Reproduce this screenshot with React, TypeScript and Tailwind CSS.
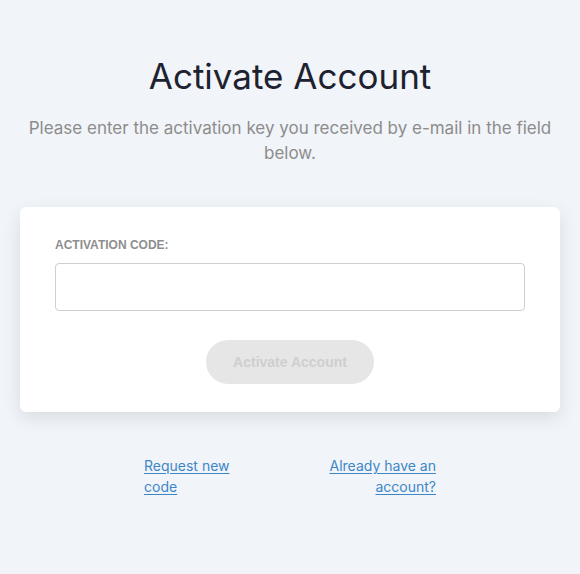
import { useState } from "react";

const App = () => {
  const [code, setCode] = useState<string>("");

  return (
    <main className="min-h-[574px] bg-[#f1f4f8] px-5 pt-[56px] font-['Inter',sans-serif]">
      <h1 className="text-center text-[35px] leading-[40px] text-[#1d2230]">
        Activate Account
      </h1>
      <p className="mx-auto mt-[20px] text-center text-[17px] leading-[25px] text-[#8c8c8c]">
        Please enter the activation key you received by e-mail in the field
        below.
      </p>
      <form
        onSubmit={(e) => e.preventDefault()}
        className="mt-[41px] flex flex-col rounded-md bg-white px-[35px] pt-[31px] pb-[28px] shadow-[0_6px_18px_rgba(0,0,0,0.10)]"
      >
        <label className="font-['Liberation_Sans',sans-serif] text-[12px] font-bold leading-[14px] text-[#8e8e8e]">
          ACTIVATION CODE:
        </label>
        <input
          className="mt-[11px] h-[48px] w-full rounded border border-[#cfcfcf] px-3 outline-none"
          type="text"
          value={code}
          onChange={({ target }) => setCode(target.value)}
        />
        <button
          type="submit"
          disabled={!code}
          className="mx-auto mt-[29px] h-[44px] w-[168px] rounded-full bg-[#e6e6e6] font-['Liberation_Sans',sans-serif] text-[14px] font-bold text-[#cfcfcf]"
        >
          Activate Account
        </button>
      </form>
      <div className="mx-auto mt-[43px] flex w-[292px] justify-between text-[14px] leading-[21px]">
        <a href="#" className="w-[100px] text-[#3d87c9] underline underline-offset-2">
          Request new code
        </a>
        <a href="#" className="w-[110px] text-right text-[#3d87c9] underline underline-offset-2">
          Already have an account?
        </a>
      </div>
    </main>
  );
};

export default App;
